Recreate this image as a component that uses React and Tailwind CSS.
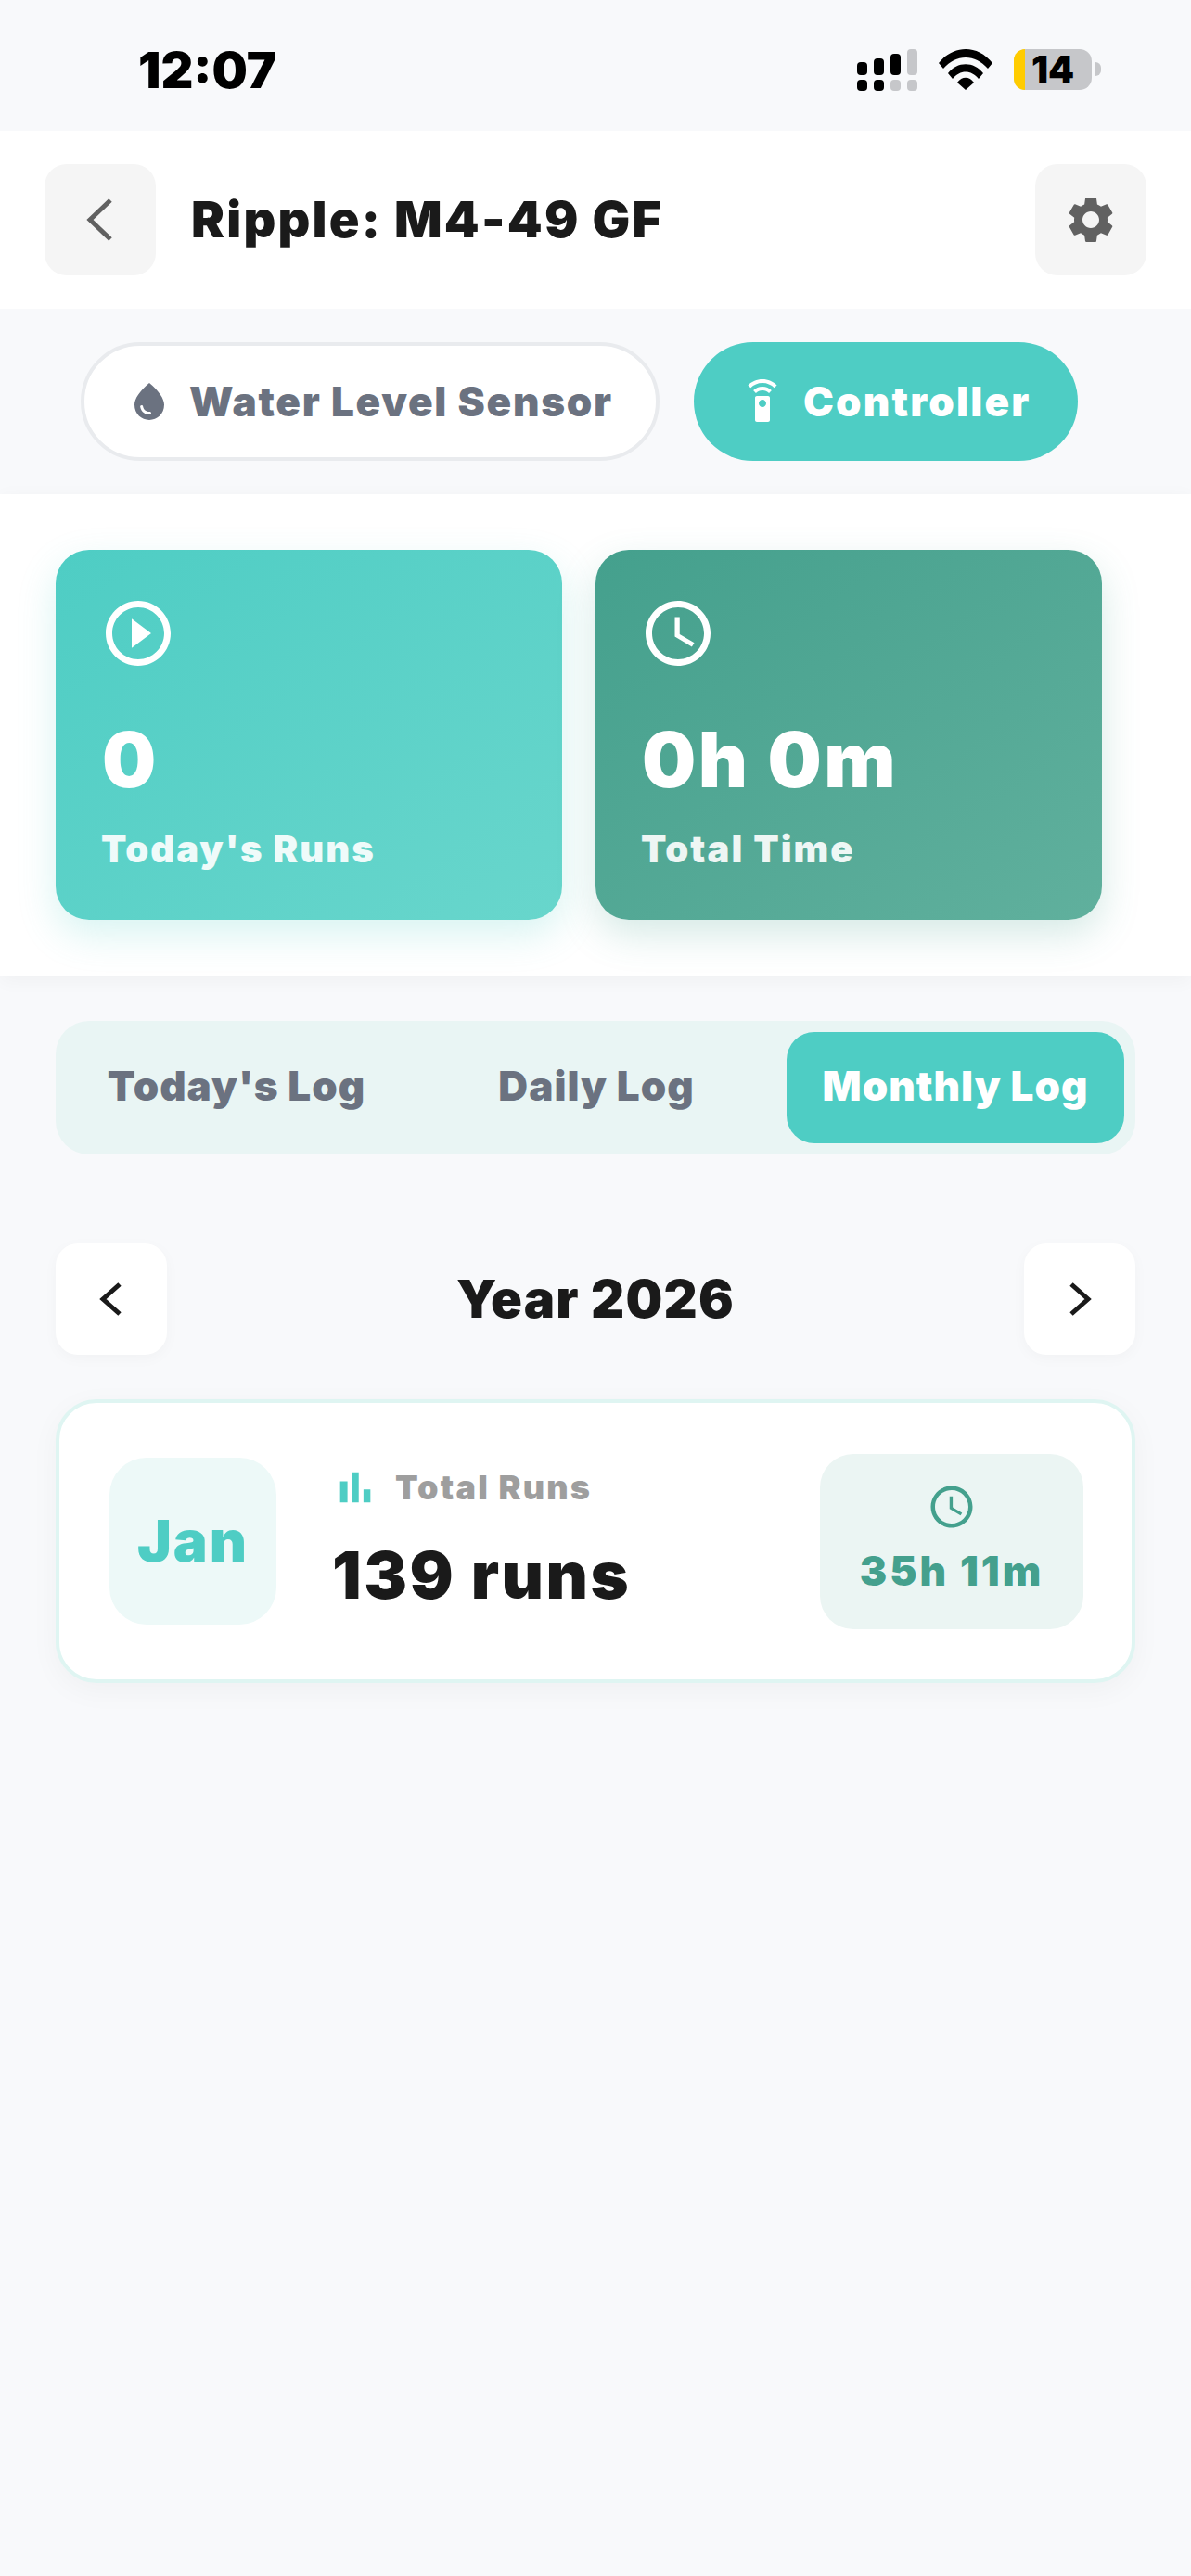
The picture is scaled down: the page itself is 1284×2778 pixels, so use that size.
import React from 'react';

const font = { fontFamily: 'Inter, "Noto Sans", sans-serif' };

const Icon = ({ d, size, className }) => (
    <svg width={size} height={size} viewBox="0 0 24 24" fill="currentColor" className={`shrink-0 ${className || ''}`}>
        <path d={d} />
    </svg>
);

const PATHS = {
    gear: 'M19.14 12.94c.04-.3.06-.61.06-.94 0-.32-.02-.64-.07-.94l2.03-1.58c.18-.14.23-.41.12-.61l-1.92-3.32c-.12-.22-.37-.29-.59-.22l-2.39.96c-.5-.38-1.03-.7-1.62-.94l-.36-2.54c-.04-.24-.24-.41-.48-.41h-3.84c-.24 0-.43.17-.47.41l-.36 2.54c-.59.24-1.13.57-1.62.94l-2.39-.96c-.22-.08-.47 0-.59.22L2.74 8.87c-.12.21-.08.47.12.61l2.03 1.58c-.05.3-.09.63-.09.94s.02.64.07.94l-2.03 1.58c-.18.14-.23.41-.12.61l1.92 3.32c.12.22.37.29.59.22l2.39-.96c.5.38 1.03.7 1.62.94l.36 2.54c.05.24.24.41.48.41h3.84c.24 0 .44-.17.47-.41l.36-2.54c.59-.24 1.13-.56 1.62-.94l2.39.96c.22.08.47 0 .59-.22l1.92-3.32c.12-.22.07-.47-.12-.61l-2.01-1.58zM12 15.6c-1.98 0-3.6-1.62-3.6-3.6s1.62-3.6 3.6-3.6 3.6 1.62 3.6 3.6-1.62 3.6-3.6 3.6z',
    drop: 'M12 2c-5.33 4.55-8 8.48-8 11.8 0 4.98 3.8 8.2 8 8.2s8-3.22 8-8.2c0-3.32-2.67-7.25-8-11.8zM7.83 14c.37 0 .67.26.74.62.41 2.22 2.28 2.98 3.64 2.87.43-.02.79.32.79.75 0 .4-.32.73-.72.75-2.13.13-4.62-1.09-5.19-4.12-.08-.45.28-.87.74-.87z',
    remote: 'M15 9H9c-.55 0-1 .45-1 1v12c0 .55.45 1 1 1h6c.55 0 1-.45 1-1V10c0-.55-.45-1-1-1zm-3 6c-1.1 0-2-.9-2-2s.9-2 2-2 2 .9 2 2-.9 2-2 2zM7.05 6.05l1.41 1.41C9.37 6.56 10.62 6 12 6s2.63.56 3.54 1.46l1.41-1.41C15.68 4.78 13.93 4 12 4s-3.68.78-4.95 2.05zM12 0C8.96 0 6.21 1.23 4.22 3.22l1.41 1.41C7.26 3.01 9.51 2 12 2s4.74 1.01 6.36 2.64l1.41-1.41C17.79 1.23 15.04 0 12 0z',
    play: 'M10 16.5l6-4.5-6-4.5v9zM12 2C6.48 2 2 6.48 2 12s4.48 10 10 10 10-4.48 10-10S17.52 2 12 2zm0 18c-4.41 0-8-3.59-8-8s3.59-8 8-8 8 3.59 8 8-3.59 8-8 8z',
    clock: 'M11.99 2C6.47 2 2 6.48 2 12s4.47 10 9.99 10C17.52 22 22 17.52 22 12S17.52 2 11.99 2zM12 20c-4.42 0-8-3.58-8-8s3.58-8 8-8 8 3.58 8 8-3.58 8-8 8zM12.5 7H11v6l5.25 3.15.75-1.23-4.5-2.67z',
    bars: 'M5 9.2h3.4V19H5zM10.4 5h3.2v14h-3.2zm5.4 8H19v6h-3.2z',
};

const Chevron = ({ dir, className, stroke = 5, w = 30, h = 44 }) => (
    <svg width={w} height={h} viewBox={`0 0 ${w} ${h}`} fill="none" stroke="currentColor" strokeWidth={stroke} className={className}>
        {dir === 'left'
            ? <polyline points={`${w - 4},2 4,${h / 2} ${w - 4},${h - 2}`} />
            : <polyline points={`4,2 ${w - 4},${h / 2} 4,${h - 2}`} />}
    </svg>
);

const StatusBar = () => (
    <div className="h-[141px] flex items-start justify-between pl-[149px] pr-[97px]">
        <span className="mt-[46px] text-[54px] leading-[60px] font-black text-black">12:07</span>
        <div className="flex items-start mt-[53px]">
            {/* cell signal */}
            <svg width="66" height="46" viewBox="0 0 66 46">
                <rect x="0" y="14" width="11" height="14" rx="4" />
                <rect x="18" y="10" width="11" height="18" rx="4" />
                <rect x="36" y="5" width="11" height="23" rx="4" />
                <rect x="54" y="0" width="11" height="28" rx="4" fill="#c6c7ca" />
                <rect x="0" y="33" width="11" height="12" rx="4" />
                <rect x="18" y="33" width="11" height="12" rx="4" />
                <rect x="36" y="33" width="11" height="12" rx="4" fill="#c6c7ca" />
                <rect x="54" y="33" width="11" height="12" rx="4" fill="#c6c7ca" />
            </svg>
            {/* wifi */}
            <svg width="58" height="44" viewBox="0 0 58 44" className="ml-[22px]">
                <path d="M0 15 C16 -5 42 -5 58 15 L53 21 C39 5 19 5 5 21 Z" />
                <path d="M10 26 C20 13 38 13 48 26 L43 32 C35 22 23 22 15 32 Z" />
                <path d="M20 36 C25 29 33 29 38 36 L29 44 Z" />
            </svg>
            {/* battery */}
            <div className="ml-[23px] relative w-[84px] h-[44px] rounded-[13px] bg-[#c6c7ca] flex items-center justify-center">
                <div className="absolute left-0 top-0 bottom-0 w-[12px] rounded-l-[13px] bg-[#ffcc00]" />
                <span className="relative text-[40px] leading-[44px] font-black text-black">14</span>
            </div>
            <div className="ml-[4px] mt-[14px] w-[6px] h-[15px] rounded-r-full bg-[#c6c7ca]" />
        </div>
    </div>
);

const StatCard = ({ icon, value, label, className }) => (
    <div className={`w-[546px] h-[399px] shrink-0 rounded-[36px] pl-[50px] pt-[48px] text-white flex flex-col ${className}`}>
        <Icon d={icon} size={84} className="-ml-[3px]" />
        <div className="mt-[47px] text-[82px] leading-[96px] font-black tracking-[2.5px]">{value}</div>
        <div className="mt-[24px] -ml-[1px] text-[40px] leading-[48px] font-black text-white/90 tracking-[2px]">{label}</div>
    </div>
);

export default function App() {
    const tabs = ["Today's Log", 'Daily Log', 'Monthly Log'];

    return (
        <div style={font} className="w-[1284px] h-[2778px] bg-[#f8f9fb] overflow-hidden">
            <StatusBar />

            <header className="h-[192px] bg-white flex items-center justify-between px-[48px]">
                <div className="flex items-center">
                    <button className="w-[120px] h-[120px] rounded-[24px] bg-[#f5f5f5] flex items-center justify-center text-[#616161]">
                        <Chevron dir="left" w={30} h={46} stroke={5} />
                    </button>
                    <h1 className="ml-[38px] text-[54px] leading-[64px] font-black text-[#1a1a1a] tracking-[2.2px]">Ripple: M4-49 GF</h1>
                </div>
                <button className="w-[120px] h-[120px] rounded-[24px] bg-[#f5f5f5] flex items-center justify-center text-[#616161]">
                    <Icon d={PATHS.gear} size={60} />
                </button>
            </header>

            <div className="h-[200px] flex items-center pl-[87px] gap-[37px]">
                <div className="w-[624px] h-[128px] rounded-full bg-white border-[4px] border-[#e9ebee] flex items-center pl-[46px] text-[#6b7280]">
                    <Icon d={PATHS.drop} size={48} />
                    <span className="ml-[19px] text-[44px] leading-[56px] font-black tracking-[1.7px] whitespace-nowrap">Water Level Sensor</span>
                </div>
                <div className="w-[414px] h-[128px] rounded-full bg-[#4ecdc4] flex items-center pl-[50px] text-white">
                    <Icon d={PATHS.remote} size={48} />
                    <span className="ml-[20px] text-[44px] leading-[56px] font-black tracking-[2.2px]">Controller</span>
                </div>
            </div>

            <section className="h-[520px] bg-white pt-[60px] pl-[60px] flex gap-[36px] shadow-[0_4px_20px_rgba(0,0,0,0.04)]">
                <StatCard
                    icon={PATHS.play}
                    value="0"
                    label="Today's Runs"
                    className="bg-gradient-to-br from-[#4ecdc4] to-[#68d6cc] shadow-[0_16px_40px_rgba(78,205,196,0.22)]"
                />
                <StatCard
                    icon={PATHS.clock}
                    value="0h 0m"
                    label="Total Time"
                    className="bg-gradient-to-br from-[#44a08d] to-[#60b09d] shadow-[0_16px_40px_rgba(68,160,141,0.22)]"
                />
            </section>

            <main className="px-[60px] pt-[48px]">
                <div className="h-[144px] rounded-[36px] bg-[#e9f5f4] p-[12px] flex">
                    {tabs.map((tab, i) => (
                        <div
                            key={tab}
                            className={`flex items-center justify-center rounded-[30px] pb-[4px] text-[44px] leading-[56px] font-black tracking-[1px] whitespace-nowrap ${i === 2 ? 'w-[364px] bg-[#4ecdc4] text-white' : 'text-[#6b7280]'} ${i === 0 ? 'w-[366px]' : ''} ${i === 1 ? 'w-[410px]' : ''}`}
                        >
                            {tab}
                        </div>
                    ))}
                </div>

                <div className="mt-[96px] flex items-center justify-between">
                    <button className="w-[120px] h-[120px] rounded-[24px] bg-white shadow-[0_4px_16px_rgba(0,0,0,0.03)] flex items-center justify-center text-[#1a1a1a]">
                        <Chevron dir="left" w={26} h={36} stroke={5} />
                    </button>
                    <span className="text-[56px] leading-[68px] font-black text-[#1a1a1a] tracking-[1.2px]">Year 2026</span>
                    <button className="w-[120px] h-[120px] rounded-[24px] bg-white shadow-[0_4px_16px_rgba(0,0,0,0.03)] flex items-center justify-center text-[#1a1a1a]">
                        <Chevron dir="right" w={26} h={36} stroke={5} />
                    </button>
                </div>

                <div className="mt-[48px] h-[306px] rounded-[44px] bg-white border-[4px] border-[#dff5f2] shadow-[0_8px_32px_rgba(0,0,0,0.04)] flex items-center pl-[54px] pr-[52px]">
                    <div className="w-[180px] h-[180px] rounded-[40px] bg-[#edf9f8] flex items-center justify-center text-[62px] leading-[72px] font-black tracking-[2px] text-[#4ecdc4]">
                        Jan
                    </div>
                    <div className="ml-[56px] flex flex-col flex-1 -mt-[9px]">
                        <div className="flex items-center">
                            <Icon d={PATHS.bars} size={56} className="text-[#4ecdc4] translate-x-[1px]" />
                            <span className="ml-[16px] text-[36px] leading-[44px] font-black text-[#9e9e9e] tracking-[2.2px]">Total Runs</span>
                        </div>
                        <span className="mt-[27px] ml-[4px] text-[70px] leading-[80px] font-black text-[#1a1a1a] tracking-[2.5px]">139 runs</span>
                    </div>
                    <div className="w-[284px] h-[189px] rounded-[36px] bg-[#ebf5f3] flex flex-col items-center pt-[30px] text-[#44a08d]">
                        <Icon d={PATHS.clock} size={54} />
                        <span className="mt-[16px] text-[44px] leading-[52px] font-black tracking-[3px]">35h 11m</span>
                    </div>
                </div>
            </main>
        </div>
    );
}
